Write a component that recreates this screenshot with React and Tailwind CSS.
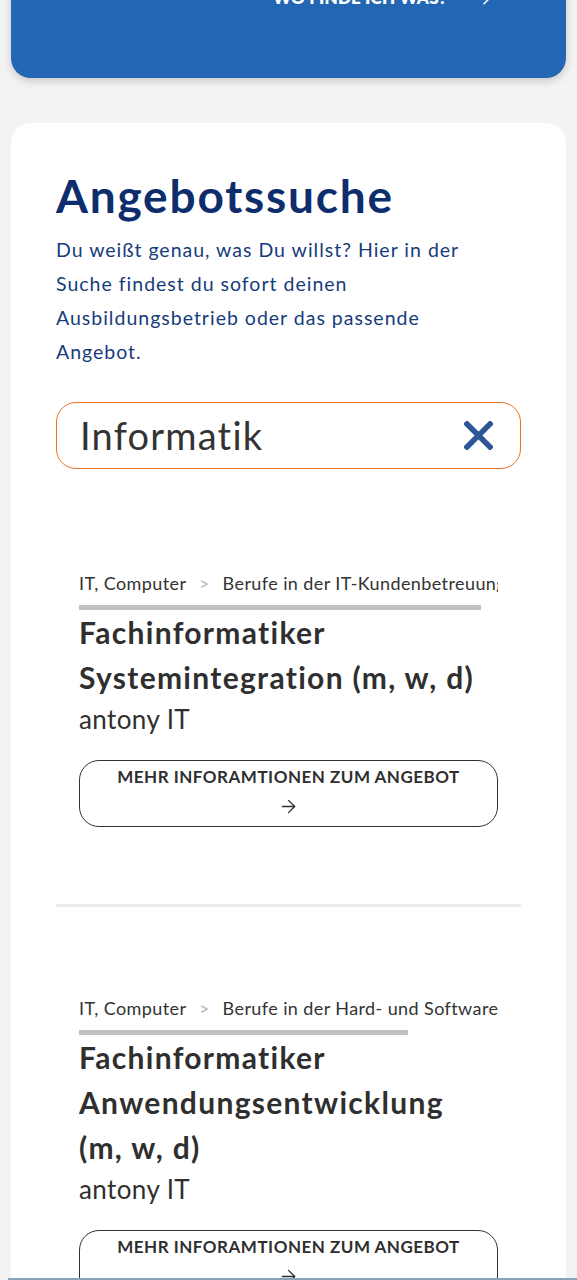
import { ArrowRight } from 'lucide-react';

const offers = [
  {
    crumbs: ['IT, Computer', 'Berufe in der IT-Kundenbetreuung und -beratung'],
    bar: 'w-[402px]',
    title: 'Fachinformatiker Systemintegration (m, w, d)',
    company: 'antony IT',
  },
  {
    crumbs: ['IT, Computer', 'Berufe in der Hard- und Softwareentwicklung'],
    bar: 'w-[329px]',
    title: 'Fachinformatiker Anwendungsentwicklung (m, w, d)',
    company: 'antony IT',
  },
];

const OfferItem = ({ offer, last }) => (
  <div className={`px-[23px] pt-[88px] ${last ? 'pb-[40px]' : 'pb-[77px] border-b-[3px] border-[#ececec]'}`}>
    <div className="w-[419px] overflow-hidden">
      <div className="flex items-center whitespace-nowrap text-[18px] leading-[27px] tracking-[0.4px] text-[#333]">
        <span>{offer.crumbs[0]}</span>
        <span className="mx-[13px] text-[17px] text-[#b0b0b0]">&gt;</span>
        <span>{offer.crumbs[1]}</span>
      </div>
    </div>
    <div className={`mt-[8px] h-[5px] bg-[#c1c1c1] ${offer.bar}`} />
    <h3 className="pr-[20px] text-[30px] font-bold leading-[45px] tracking-[1.3px] text-[#2f2f2f]">{offer.title}</h3>
    <p className="mt-[1px] text-[26px] leading-[36px] tracking-[0.4px] text-[#2f2f2f]">{offer.company}</p>
    <a className="mt-[23px] flex h-[67px] w-[419px] flex-col items-center rounded-[20px] border-[1.5px] border-[#333] pt-[5px] text-[#2f2f2f]">
      <span className="text-[17px] font-bold uppercase leading-[22px] tracking-[0.5px]">Mehr Inforamtionen zum Angebot</span>
      <ArrowRight className="mt-[8px] h-[21px] w-[21px]" strokeWidth={1.5} />
    </a>
  </div>
);

export default function App() {
  return (
    <div className="min-h-screen overflow-hidden bg-[#f3f3f3] px-[11px] font-['Lato',sans-serif]">
      <div className="-mt-[60px] h-[138px] rounded-[20px] bg-[#2367b4] shadow-[0_3px_8px_rgba(0,0,0,0.18)]">
        <div className="flex items-center justify-end pr-[72px] pt-[45px] text-white">
          <span className="text-[17px] font-extrabold uppercase tracking-[0.2px]">Wo finde ich was?</span>
          <ArrowRight className="ml-[27px] h-[20px] w-[20px]" strokeWidth={1.8} />
        </div>
      </div>

      <div className="mt-[45px] rounded-[20px] bg-white px-[45px] pt-[45px]">
        <h1 className="text-[46px] font-bold leading-[56px] tracking-[1.8px] text-[#0d2d6c]">Angebotssuche</h1>
        <p className="mt-[9px] pr-[30px] text-[19.5px] leading-[34px] tracking-[1px] text-[#163c7b]">
          Du weißt genau, was Du willst? Hier in der Suche findest du sofort deinen Ausbildungsbetrieb oder das passende Angebot.
        </p>
        <div className="mt-[33px] mb-[13px] flex h-[67px] items-center justify-between rounded-[20px] border-[1.5px] border-[#ea7424] pl-[23px] pr-[27px]">
          <span className="text-[38px] tracking-[1.2px] text-[#333]">Informatik</span>
          <svg width="29" height="29" viewBox="0 0 29 29">
            <path d="M3 3 L26 26 M26 3 L3 26" stroke="#2d5699" strokeWidth="5.5" strokeLinecap="square" />
          </svg>
        </div>
        {offers.map((o, i) => (
          <OfferItem key={i} offer={o} last={i === offers.length - 1} />
        ))}
      </div>
      <div className="fixed bottom-0 left-[8px] right-0 h-[2px] bg-[#8aa3ba]" />
    </div>
  );
}
